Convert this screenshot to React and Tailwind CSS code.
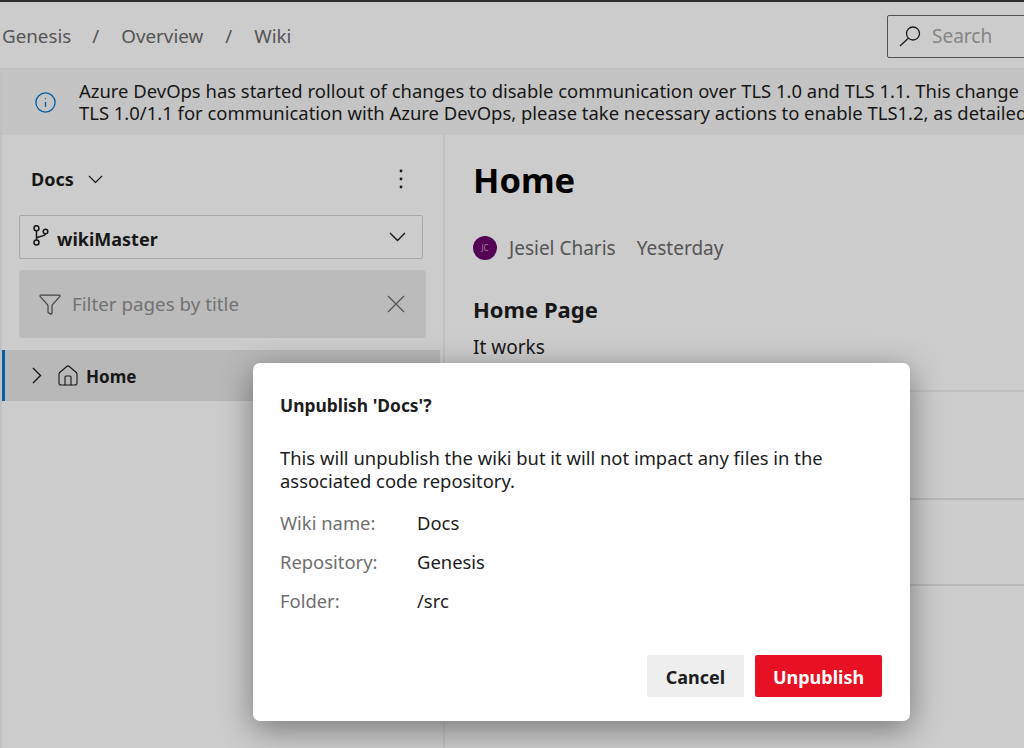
import React from 'react';
import { Filter, House, Info } from 'lucide-react';

const font = "font-['Noto_Sans','Open_Sans',sans-serif]";

function Chevron({ w = 17, dir = 'down' }) {
  const points = dir === 'down' ? '1,1 8.5,8.5 16,1' : '1,1 8.5,8.5 1,16';
  return (
    <svg width={w} height={dir === 'down' ? (w * 10) / 17 : 17} viewBox={dir === 'down' ? '0 0 17 10' : '0 0 10 17'} fill="none" stroke="currentColor" strokeWidth="1.4" className="shrink-0">
      <polyline points={points} />
    </svg>
  );
}

function BranchIcon() {
  return (
    <svg width="16" height="21" viewBox="0 0 16 21" fill="none" stroke="currentColor" strokeWidth="1.5" className="shrink-0 mb-[4px]">
      <circle cx="3.5" cy="3.2" r="2.5" />
      <circle cx="3.5" cy="17.5" r="2.5" />
      <circle cx="12.5" cy="6.5" r="2.3" />
      <path d="M3.5 5.7V15M3.5 13.5C3.5 11 12.5 12 12.5 8.8" />
    </svg>
  );
}

function SearchIcon() {
  return (
    <svg width="22" height="21" viewBox="0 0 22 21" fill="none" stroke="#222" strokeWidth="1.3" className="shrink-0">
      <circle cx="14" cy="7.5" r="6.5" />
      <path d="M9.3 12.2L1 20" />
    </svg>
  );
}

function Crumbs() {
  return (
    <div className="flex items-center text-[18.8px] text-[#6b6b6b] mt-[3px]">
      <span>Genesis</span>
      <span className="ml-[21px] mr-[22px]">/</span>
      <span>Overview</span>
      <span className="mx-[22px]">/</span>
      <span>Wiki</span>
    </div>
  );
}

function Sidebar() {
  return (
    <aside className="w-[445px] shrink-0 border-r-2 border-[#f0f0f0] border-l-2 h-full">
      <div className="flex items-center justify-between pl-[29px] pr-[40px] pt-[8px] h-[80px]">
        <div className="flex items-center gap-[14px] text-[18px] font-bold text-[#1d1d1d]">
          Docs <Chevron w={15} />
        </div>
        <svg width="4" height="20" viewBox="0 0 4 20" fill="#222">
          <circle cx="2" cy="2" r="1.4" />
          <circle cx="2" cy="10" r="1.4" />
          <circle cx="2" cy="18" r="1.4" />
        </svg>
      </div>
      <div className="ml-[17px] mr-[20px] h-[44px] border border-[#d4d4d4] rounded-[2px] flex items-center pl-[13px] pr-[16px] text-[#1d1d1d]">
        <BranchIcon />
        <span className="ml-[8px] text-[18px] font-bold flex-1 mt-[4px]">wikiMaster</span>
        <Chevron />
      </div>
      <div className="ml-[17px] mr-[17px] mt-[11px] h-[68px] bg-[#eaeaea] rounded-[4px] flex items-center pl-[19px] pr-[21px] text-[#7a7a7a]">
        <Filter size={24} strokeWidth={1.25} className="text-[#555]" />
        <span className="ml-[10px] text-[18.8px] text-[#8f8f8f] flex-1">Filter pages by title</span>
        <svg width="18" height="18" viewBox="0 0 18 18" stroke="#666" strokeWidth="1.2">
          <path d="M1 1L17 17M17 1L1 17" />
        </svg>
      </div>
      <div className="mt-[12px] mr-[3px] h-[51px] bg-[#e6e6e6] border-l-[3px] border-[#0078d4] flex items-center pl-[27px] text-[#1d1d1d]">
        <Chevron w={10} dir="right" />
        <House size={24} strokeWidth={1.1} className="ml-[14px]" />
        <span className="ml-[6px] text-[17px] font-bold mt-[2px]">Home</span>
      </div>
    </aside>
  );
}

function Article() {
  return (
    <main className="flex-1 pl-[28px]">
      <h1 className="text-[34.5px] font-bold text-black leading-none mt-[28px]">Home</h1>
      <div className="flex items-center mt-[36px] text-[19px] text-[#6b6b6b]">
        <span className="w-[24px] h-[24px] rounded-full bg-[#68006b] text-[8px] text-[#c9a6ca] flex items-center justify-center">JC</span>
        <span className="ml-[12px]">Jesiel Charis</span>
        <span className="ml-[21px]">Yesterday</span>
      </div>
      <h2 className="text-[22px] font-bold text-[#1d1d1d] mt-[36px] leading-none">Home Page</h2>
      <p className="text-[19px] text-[#1d1d1d] mt-[18px] leading-none">It works</p>
      <div className="mt-[33px] border-t-2 border-[#f0f0f0] h-[108px]" />
      <div className="border-t-2 border-[#e6e6e6] h-[86px]" />
      <div className="border-t-2 border-[#e6e6e6]" />
    </main>
  );
}

function InfoRow({ label, value }) {
  return (
    <div className="flex h-[39px] items-center">
      <span className="w-[137px] text-[#6f6f6f]">{label}</span>
      <span className="text-[#1d1d1d]">{value}</span>
    </div>
  );
}

function Dialog() {
  return (
    <div className="absolute left-[253px] top-[363px] w-[657px] h-[358px] bg-white rounded-[7px] shadow-[0_8px_32px_rgba(0,0,0,0.42)] pl-[27px] pr-[28px] pt-[30px] text-[18.4px]">
      <h3 className="font-bold text-[#1d1d1d] text-[17.4px] leading-[24px]">Unpublish 'Docs'?</h3>
      <p className="mt-[29px] text-[#1d1d1d] leading-[23px] w-[590px]">
        This will unpublish the wiki but it will not impact any files in the associated code repository.
      </p>
      <div className="mt-[11px]">
        <InfoRow label="Wiki name:" value="Docs" />
        <InfoRow label="Repository:" value="Genesis" />
        <InfoRow label="Folder:" value="/src" />
      </div>
      <div className="flex justify-end gap-[11px] mt-[35px] text-[18px]">
        <button className="w-[97px] h-[42px] pt-[2px] bg-[#eeeeee] rounded-[2px] font-bold text-[#1d1d1d]">Cancel</button>
        <button className="w-[127px] h-[42px] pt-[2px] bg-[#e81123] rounded-[2px] font-bold text-white">Unpublish</button>
      </div>
    </div>
  );
}

export default function App() {
  return (
    <div className={`relative h-[748px] w-[1024px] overflow-hidden bg-white ${font}`}>
      <div className="h-[2px] bg-[#3a3a3a]" />
      <header className="h-[66px] flex items-center justify-between pl-[2px] border-b-2 border-[#f0f0f0] box-content">
        <Crumbs />
        <div className="w-[140px] h-[43px] -mr-[3px] mt-[3px] border border-[#666] rounded-[2px] flex items-center pl-[11px] text-[19px] text-[#a8a8a8]">
          <SearchIcon />
          <span className="ml-[11px]">Search</span>
        </div>
      </header>
      <div className="h-[65px] bg-[#f6f6f6] flex items-center border-l-2 border-[#f0f0f0] whitespace-nowrap">
        <Info size={23} strokeWidth={1.4} className="ml-[32px] text-[#0078d4] shrink-0" />
        <p className="ml-[22px] text-[18.45px] leading-[22.5px] text-[#1d1d1d] -mt-[1px]">
          Azure DevOps has started rollout of changes to disable communication over TLS 1.0 and TLS 1.1. This change
          <br />
          TLS 1.0/1.1 for communication with Azure DevOps, please take necessary actions to enable TLS1.2, as detailed
        </p>
      </div>
      <div className="flex h-[613px]">
        <Sidebar />
        <Article />
      </div>
      <div className="absolute inset-0 bg-black/20" />
      <Dialog />
    </div>
  );
}
